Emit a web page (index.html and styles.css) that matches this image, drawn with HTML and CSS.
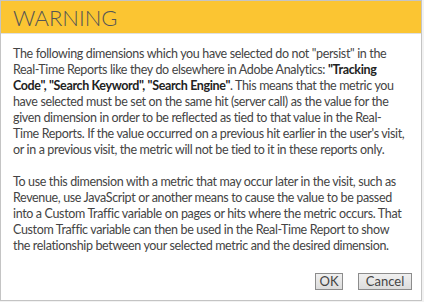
FILE: index.html
```html
<!DOCTYPE html>
<html lang="en">
<head>
    <meta charset="UTF-8">
    <title>Warning</title>
    <link rel="stylesheet" href="styles.css">
</head>
<body>
    <div class="dialog">
        <div class="dialog-header">WARNING</div>
        <div class="dialog-body">
            <p>The following dimensions which you have selected do not "persist" in the<br>
            Real-Time Reports like they do elsewhere in Adobe Analytics: <b>"Tracking<br>
            Code", "Search Keyword", "Search Engine"</b>. This means that the metric you<br>
            have selected must be set on the same hit (server call) as the value for the<br>
            given dimension in order to be reflected as tied to that value in the Real-<br>
            Time Reports. If the value occurred on a previous hit earlier in the user's visit,<br>
            or in a previous visit, the metric will not be tied to it in these reports only.</p>
            <p>To use this dimension with a metric that may occur later in the visit, such as<br>
            Revenue, use JavaScript or another means to cause the value to be passed<br>
            into a Custom Traffic variable on pages or hits where the metric occurs. That<br>
            Custom Traffic variable can then be used in the Real-Time Report to show<br>
            the relationship between your selected metric and the desired dimension.</p>
        </div>
        <div class="dialog-buttons">
            <button class="btn btn-ok">OK</button>
            <button class="btn">Cancel</button>
        </div>
    </div>
</body>
</html>
```

FILE: styles.css
```css
body {
    margin: 0;
    background-color: #f2f2f2;
    font-family: Lato, sans-serif;
}

.dialog {
    width: 420px;
    height: 299px;
    background-color: #fff;
    border: 1px solid #c4c4c4;
    display: flex;
    flex-direction: column;
}

.dialog-header {
    background-color: #fbc532;
    color: #555;
    font-size: 22px;
    font-weight: 300;
    height: 32px;
    line-height: 34px;
    padding: 0 12px;
    border-bottom: 1px solid #e0e0e0;
}

.dialog-body {
    padding: 12px 12px 0 12px;
    color: #444;
    font-size: 12.5px;
    letter-spacing: -0.35px;
    line-height: 16px;
    white-space: nowrap;
    flex: 1;
}

.dialog-body p {
    margin: 0 0 16px 0;
}

.dialog-body p:last-child {
    margin-bottom: 0;
}

.dialog-body b {
    color: #222;
}

.dialog-buttons {
    display: flex;
    justify-content: flex-end;
    gap: 15px;
    padding: 0 9px 10px 0;
}

.btn {
    font-family: Lato, sans-serif;
    font-size: 13px;
    color: #444;
    background: linear-gradient(#f0f0f0, #dcdcdc);
    border: 1px solid #8c8c8c;
    border-radius: 0;
    height: 17px;
    width: 54px;
    padding: 0;
    line-height: 15px;
}

.btn-ok {
    width: 28px;
}
```
